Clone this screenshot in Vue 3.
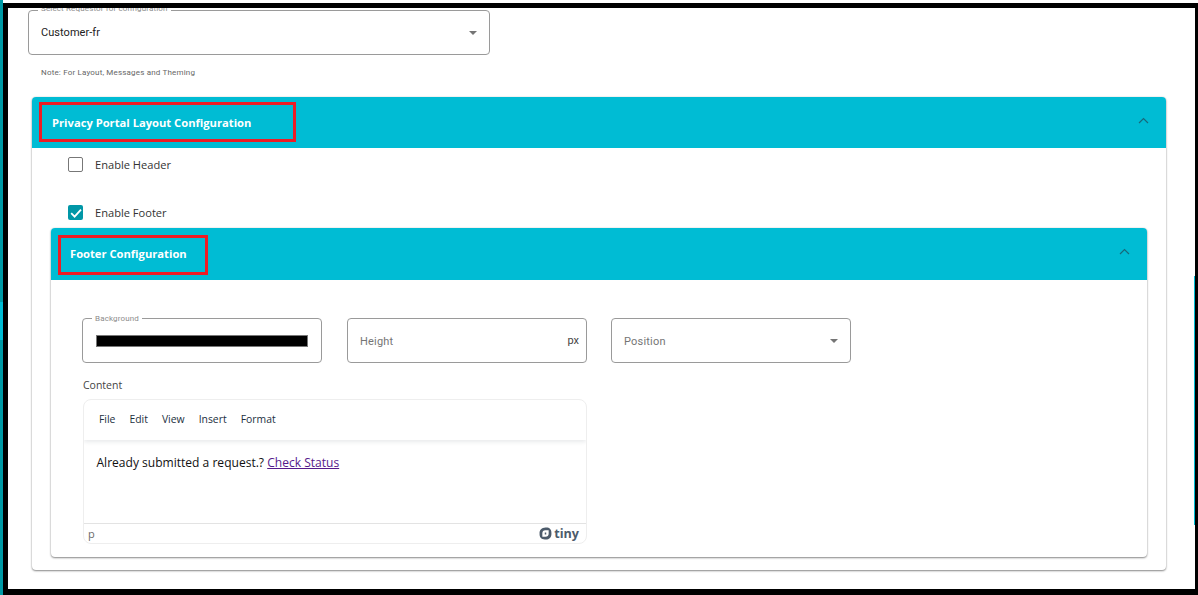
<script setup>
const menus = ['File', 'Edit', 'View', 'Insert', 'Format']
</script>

<template>
  <div class="shell">
    <div class="strip"></div>
    <div class="frame">
      <div class="edge-mark"></div>
      <main class="page">
        <div class="field requestor">
          <span class="legend legend-req">Select Requestor for configuration</span>
          <span class="value">Customer-fr</span>
          <span class="arrow"></span>
        </div>
        <p class="note">Note: For Layout, Messages and Theming</p>

        <section class="card outer">
          <header class="bar">
            <span class="marked marked-outer"><span class="title">Privacy Portal Layout Configuration</span></span>
            <svg class="chev" width="11" height="7" viewBox="0 0 11 7"><path d="M1 6 L5.5 1.5 L10 6" /></svg>
          </header>
          <div class="outer-body">
            <label class="check first">
              <span class="box"></span>
              <span>Enable Header</span>
            </label>
            <label class="check second">
              <span class="box on">
                <svg width="14" height="14" viewBox="0 0 14 14"><path d="M2.2 7.2 L5.6 10.6 L12 3.6" /></svg>
              </span>
              <span>Enable Footer</span>
            </label>

            <section class="card inner">
              <header class="bar bar-inner">
                <span class="marked marked-inner"><span class="title">Footer Configuration</span></span>
                <svg class="chev" width="11" height="7" viewBox="0 0 11 7"><path d="M1 6 L5.5 1.5 L10 6" /></svg>
              </header>
              <div class="inner-body">
                <div class="fields">
                  <div class="field small">
                    <span class="legend legend-bg">Background</span>
                    <span class="swatch"></span>
                  </div>
                  <div class="field small">
                    <span class="placeholder">Height</span>
                    <span class="unit">px</span>
                  </div>
                  <div class="field small">
                    <span class="placeholder">Position</span>
                    <span class="arrow"></span>
                  </div>
                </div>
                <div class="content-label">Content</div>
                <div class="editor">
                  <nav class="menubar">
                    <span v-for="m in menus" :key="m">{{ m }}</span>
                  </nav>
                  <div class="doc">Already submitted a request.? <a class="link">Check Status</a></div>
                  <footer class="status">
                    <span class="path">p</span>
                    <span class="brand">
                      <svg width="13" height="13" viewBox="0 0 14 14">
                        <path class="logo-a" d="M7 .6 C11 .2 13.6 2.4 13.4 6.6 C13.6 11 11 13.6 6.8 13.4 C2.4 13.6 .4 11 .6 7 C.4 3 3 .8 7 .6Z" />
                        <path class="logo-b" d="M6.8 3.4 L10.4 3.4 L10.4 7.4 C10.4 9.4 9 10.6 7 10.6 L3.6 10.6 L3.6 6.6 C3.6 4.6 4.8 3.4 6.8 3.4Z M6.2 6 L6.2 8 L7.8 8 L7.8 6Z" fill-rule="evenodd" />
                      </svg>
                      <span>tiny</span>
                    </span>
                  </footer>
                </div>
              </div>
            </section>
          </div>
        </section>
      </main>
    </div>
  </div>
</template>

<style>
html, body { margin: 0; background: #fff; overflow: hidden; }
</style>

<style scoped>
.shell {
  width: 1198px;
  height: 595px;
  display: flex;
  background: #fff;
  font-family: Roboto, "Liberation Sans", sans-serif;
  overflow: hidden;
}
.strip {
  width: 3px;
  flex: none;
  background: linear-gradient(#009aa6 0 302px, #00bcd4 302px 340px, #009aa6 340px);
}
.frame {
  flex: 1;
  min-width: 0;
  margin-top: 3px;
  height: 592px;
  box-sizing: border-box;
  border: solid #000;
  border-width: 5px 3px 6px 5px;
  position: relative;
  overflow: hidden;
}
.edge-mark {
  position: absolute;
  right: 0;
  top: 268px;
  height: 249px;
  width: 1px;
  background: #00bcd4;
}
.page {
  padding: 2px 0 0 20px;
}
.field {
  position: relative;
  box-sizing: border-box;
  border: 1px solid #9a9a9a;
  border-radius: 4px;
  display: flex;
  align-items: center;
  background: #fff;
}
.requestor {
  width: 462px;
  height: 45px;
  padding: 0 12px;
}
.legend {
  position: absolute;
  top: -5px;
  left: 9px;
  padding: 0 3px;
  background: #fff;
  font-size: 8px;
  line-height: 9px;
  color: #8c8c8c;
  letter-spacing: .15px;
  white-space: nowrap;
}
.legend-req { top: -7px; }
.value {
  font-size: 11px;
  letter-spacing: .05px;
  color: #222;
}
.arrow {
  position: absolute;
  right: 12px;
  top: 20px;
  width: 0;
  height: 0;
  border-left: 4.5px solid transparent;
  border-right: 4.5px solid transparent;
  border-top: 4.5px solid #757575;
}
.note {
  margin: 13px 0 0 13px;
  font-size: 8px;
  line-height: 10px;
  color: #666;
  letter-spacing: .18px;
}
.card {
  background: #fff;
  border-radius: 4px;
  box-shadow: 0 1px 2px rgba(0, 0, 0, .45), 0 0 2px rgba(0, 0, 0, .12);
}
.outer {
  width: 1134px;
  margin: 19px 0 0 4px;
  height: 473px;
}
.bar {
  height: 51px;
  background: #00bcd4;
  border-radius: 4px 4px 0 0;
  display: flex;
  align-items: flex-start;
  justify-content: space-between;
  box-sizing: border-box;
  padding: 5px 17px 0 7px;
}
.bar-inner {
  height: 52px;
  padding-top: 7px;
}
.marked {
  box-sizing: border-box;
  border: 3px solid #ed1c24;
  display: flex;
  align-items: center;
  height: 40px;
  padding: 1px 0 0 10px;
}
.marked-outer { width: 257px; }
.marked-inner { width: 150px; padding: 0 0 3px 9px; }
.title {
  font-family: "Open Sans", sans-serif;
  font-weight: 700;
  font-size: 11.2px;
  color: #fff;
  white-space: nowrap;
}
.chev { margin-top: 15px; }
.bar-inner .chev { margin-top: 13px; }
.chev path {
  fill: none;
  stroke: #17697b;
  stroke-width: 1.2;
}
.outer-body {
  padding: 0 19px;
}
.check {
  display: flex;
  align-items: center;
  gap: 12px;
  margin-left: 17px;
  font-family: "Open Sans", sans-serif;
  font-size: 11.1px;
  color: #333;
}
.first { padding-top: 9px; }
.second { padding-top: 33px; }
.box {
  box-sizing: border-box;
  width: 15px;
  height: 15px;
  border: 1px solid #777;
  border-radius: 2px;
  flex: none;
  display: block;
}
.box.on {
  background: #0097a7;
  border: 0;
}
.box svg { display: block; margin: .5px; }
.box path {
  fill: none;
  stroke: #fff;
  stroke-width: 1.8;
}
.inner {
  margin-top: 8px;
  height: 329px;
}
.inner-body {
  padding: 38px 0 0 31px;
}
.fields {
  display: flex;
  gap: 25px;
}
.small {
  width: 240px;
  height: 45px;
  padding: 0 13px 0 12px;
}
.small:first-child { padding-left: 13px; }
.small:last-child { margin-left: -1px; }
.swatch {
  flex: 1;
  height: 12px;
  background: #000;
  border: 1px solid #777;
  box-sizing: border-box;
}
.placeholder {
  font-size: 11px;
  letter-spacing: .2px;
  color: #757575;
  padding-top: 1px;
}
.unit {
  margin-left: auto;
  margin-right: -6px;
  font-size: 11px;
  color: #444;
}
.content-label {
  margin-top: 15px;
  margin-left: 1px;
  font-family: "Open Sans", sans-serif;
  font-size: 10.5px;
  line-height: 14px;
  color: #444;
}
.editor {
  box-sizing: border-box;
  margin: 7px 0 0 1px;
  width: 504px;
  height: 145px;
  border: 1px solid #eee;
  border-radius: 8px;
  display: flex;
  flex-direction: column;
  overflow: hidden;
}
.menubar {
  height: 40px;
  flex: none;
  box-sizing: border-box;
  padding: 0 0 2px 15px;
  display: flex;
  align-items: center;
  gap: 14px;
  font-family: "Open Sans", sans-serif;
  font-size: 10.4px;
  color: #222f3e;
  box-shadow: 0 2px 4px rgba(34, 47, 62, .1);
}
.doc {
  flex: 1;
  padding: 15px 12.5px 0;
  font-family: "Open Sans", sans-serif;
  font-size: 12.05px;
  line-height: 16px;
  color: #111;
}
.link {
  color: #551a8b;
  text-decoration: underline;
}
.status {
  height: 20px;
  flex: none;
  box-sizing: border-box;
  border-top: 1px solid #e3e3e3;
  display: flex;
  align-items: center;
  justify-content: space-between;
  padding: 0 7px 0 4px;
}
.path {
  font-family: "Open Sans", sans-serif;
  font-size: 11px;
  color: #6b6b6b;
}
.brand {
  display: flex;
  align-items: center;
  gap: 2px;
  font-family: "Open Sans", sans-serif;
  font-weight: 700;
  font-size: 12.6px;
  color: #4c5b6b;
}
.logo-a { fill: #4c5b6b; }
.logo-b { fill: #fff; }
</style>
